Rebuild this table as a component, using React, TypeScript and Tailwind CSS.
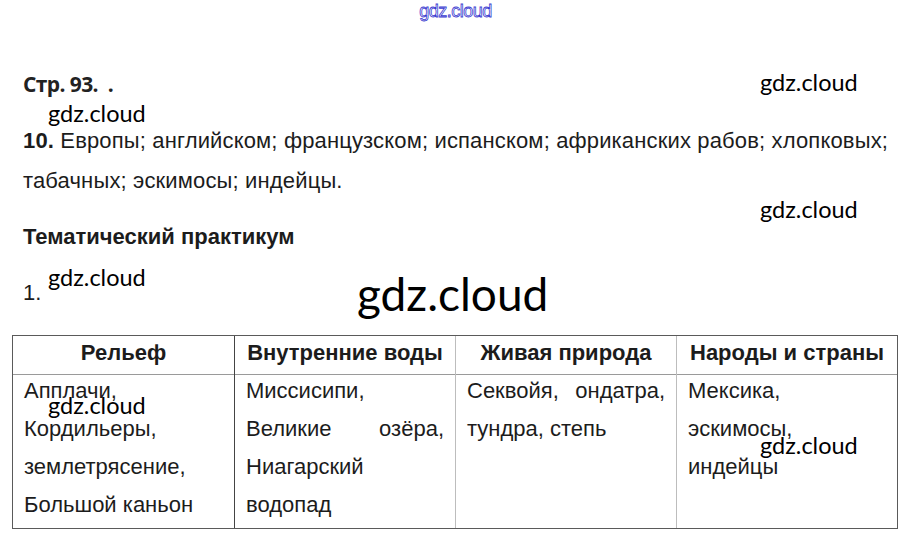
import React from "react";

function Wm({ className }: { className: string }) {
  return (
    <span
      className={`absolute font-['Lato','Open_Sans',sans-serif] text-black leading-none ${className}`}
    >
      gdz.cloud
    </span>
  );
}

const justified = (line: string) => line.startsWith("Великие") || line.startsWith("Секвойя");

export default function App() {
  const headers = ["Рельеф", "Внутренние воды", "Живая природа", "Народы и страны"];
  const rows = [
    ["Апплачи,", "Кордильеры,", "землетрясение,", "Большой каньон"],
    ["Миссисипи,", "Великие озёра,", "Ниагарский", "водопад"],
    ["Секвойя, ондатра,", "тундра, степь"],
    ["Мексика,", "эскимосы,", "индейцы"],
  ];
  const divider = (i: number) =>
    i === 1 ? "border-l border-[#444]" : i > 1 ? "border-l border-[#bdbdbd]" : "";
  return (
    <div className="relative w-[911px] h-[545px] overflow-hidden bg-white text-[#1c1c1c] font-['Liberation_Sans',Arial,sans-serif]">
      <div className="h-[70px] flex justify-center pt-[2px]">
        <span className="text-[18px] leading-none text-transparent [-webkit-text-stroke:0.8px_#3a3ad0] tracking-[-0.5px]">
          gdz.cloud
        </span>
      </div>
      <div className="flex flex-col pl-[23px] pr-[20px]">
        <div className="font-['Open_Sans',sans-serif] font-bold text-[21px] leading-[28px] tracking-[-0.6px] text-[#222]">
          Стр. 93.&nbsp;&nbsp;.
        </div>
        <div className="mt-[23px] text-[22px] leading-[40px] tracking-[0.15px] whitespace-nowrap">
          <span className="font-bold">10.</span> Европы; английском; французском; испанском; африканских рабов; хлопковых;
          <br />
          табачных; эскимосы; индейцы.
        </div>
        <div className="mt-[21px] font-bold text-[22px] leading-[30px]">Тематический практикум</div>
        <div className="mt-[26px] text-[22px] leading-[30px]">1.</div>
      </div>
      <div className="mt-[27px] ml-[12px] w-[886px] border border-[#5a5a5a]">
        <div className="grid grid-cols-4 h-[39px] border-b border-[#9a9a9a]">
          {headers.map((h, i) => (
            <div key={h} className={`flex items-center justify-center pb-[6px] font-bold text-[22px] ${divider(i)}`}>
              {h}
            </div>
          ))}
        </div>
        <div className="grid grid-cols-4 h-[153px]">
          {rows.map((col, i) => (
            <div key={i} className={`px-[11px] text-[22px] leading-[38px] -mt-[3px] ${divider(i)}`}>
              {col.map((line) => (
                <div key={line} className={justified(line) ? "flex justify-between" : ""}>
                  {justified(line) ? line.split(" ").map((w) => <span key={w}>{w}</span>) : line}
                </div>
              ))}
            </div>
          ))}
        </div>
      </div>
      <Wm className="left-[760px] top-[71px] text-[23.5px]" />
      <Wm className="left-[48px] top-[102px] text-[23.5px]" />
      <Wm className="left-[760px] top-[198px] text-[23.5px]" />
      <Wm className="left-[48px] top-[266px] text-[23.5px]" />
      <Wm className="left-[357px] top-[271px] text-[46px]" />
      <Wm className="left-[48px] top-[394px] text-[23.5px]" />
      <Wm className="left-[760px] top-[434px] text-[23.5px]" />
    </div>
  );
}
